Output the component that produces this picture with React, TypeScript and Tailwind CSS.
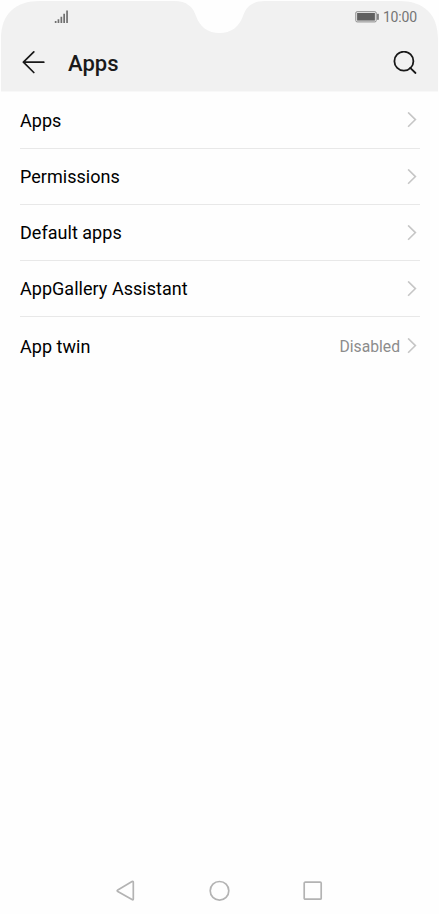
type Item = { label: string; value?: string; row: string };

const items: Item[] = [
  { label: 'Apps', row: 'h-[57px] border-b' },
  { label: 'Permissions', row: 'h-14 border-b' },
  { label: 'Default apps', row: 'h-14 border-b' },
  { label: 'AppGallery Assistant', row: 'h-14 border-b' },
  { label: 'App twin', value: 'Disabled', row: 'h-[58px]' },
];

function Chevron() {
  return (
    <svg width="10" height="16" viewBox="0 0 10 16" fill="none" stroke="#c6c6c6" strokeWidth="1.6" className="mr-[3px] shrink-0">
      <path d="M1.1.4 8.4 7.6 1.1 14.8" />
    </svg>
  );
}

function StatusBar() {
  return (
    <div className="flex h-[33px] items-center justify-between pl-[54px] pr-[22px]">
      <svg width="15" height="14" viewBox="0 0 15 14" fill="#707070">
        <path d="M.8 11h1.7v2H.8zM3.6 9.2h1.7V13H3.6zM6.5 6.7h1.7V13H6.5zM9.3 3.8H11V13H9.3zM12.2.5h1.7V13h-1.7z" />
      </svg>
      <div className="flex items-center gap-1">
        <svg width="24" height="12" viewBox="0 0 24 12">
          <rect x=".8" y=".7" width="20.4" height="10.2" rx="1.3" fill="#f1f1f1" stroke="#8a8a8a" />
          <rect x="2.1" y="2" width="17.8" height="7.6" fill="#606060" />
          <rect x="22.1" y="2.8" width="1.7" height="6" fill="#777" />
        </svg>
        <span className="text-[14px] leading-4 tracking-[-0.15px] text-[#757575]">10:00</span>
      </div>
    </div>
  );
}

export default function App() {
  return (
    <div className="flex h-[914px] w-[439px] flex-col bg-[#fefefe] font-['Roboto',sans-serif]">
      <header className="relative h-[92px] shrink-0">
        <svg className="absolute inset-0" width="439" height="92" viewBox="0 0 439 92">
          <path d="M1 91.5V39C1 14 15 1 40 1H174C187 1 193 7 196 16C200 27 208 33 219.5 33C231 33 239 27 243 16C246 7 252 1 265 1H399C424 1 438 14 438 39V91.5Z" fill="#f1f1f1" />
        </svg>
        <div className="relative">
          <StatusBar />
          <div className="flex h-[59px] items-center pl-[22px] pr-[22px]">
            <svg width="23" height="24" viewBox="0 0 23 24" fill="none" stroke="#181818" strokeWidth="1.7" strokeLinecap="round" strokeLinejoin="round">
              <path d="M21.8 11.2H1.5M11.8.9 1.4 11.2 11.8 21.5" />
            </svg>
            <h1 className="ml-[23px] mt-[2px] flex-1 text-[22px] font-medium leading-7 text-[#1a1a1a]">Apps</h1>
            <svg width="24" height="24" viewBox="0 0 24 24" fill="none" stroke="#181818" strokeWidth="1.8">
              <circle cx="10.9" cy="10.2" r="9.5" />
              <path d="m17.2 16.9 5.3 5.1" strokeLinecap="round" />
            </svg>
          </div>
        </div>
      </header>
      <main className="flex-1 pl-5 pr-[19px]">
        {items.map((item) => (
          <div key={item.label} className={`flex items-center border-[#e8e8e8] ${item.row}`}>
            <span className="mt-px flex-1 text-[18px] leading-6 tracking-[0.03px] text-black">{item.label}</span>
            {item.value && <span className="mr-[7px] mt-px text-[15.7px] leading-6 text-[#8c8c8c]">{item.value}</span>}
            <Chevron />
          </div>
        ))}
      </main>
      <nav className="flex h-[46px] shrink-0 items-center justify-between pl-[116px] pr-[116px]">
        <svg width="20" height="22" viewBox="0 0 20 22" fill="none" stroke="#b3b3b3" strokeWidth="1.7">
          <path d="M1.8 9.9 16 1.6Q17.3 1 17.3 2.3V18.9Q17.3 20.3 16 19.6L1.8 11.5Q.5 10.7 1.8 9.9Z" />
        </svg>
        <svg width="22" height="22" viewBox="0 0 22 22" fill="none" stroke="#b3b3b3" strokeWidth="1.7">
          <circle cx="10.5" cy="10.8" r="9.3" />
        </svg>
        <svg width="20" height="20" viewBox="0 0 20 20" fill="none" stroke="#b3b3b3" strokeWidth="1.7">
          <rect x="1.2" y="1.2" width="17" height="17" rx="1" />
        </svg>
      </nav>
    </div>
  );
}
